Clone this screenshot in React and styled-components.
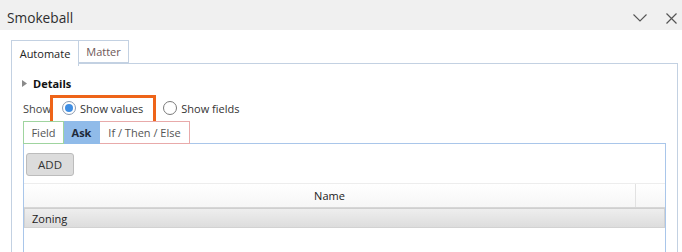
import styled, { createGlobalStyle } from "styled-components";

const GlobalStyle = createGlobalStyle`
  html, body {
    margin: 0;
    padding: 0;
    background: #ffffff;
    overflow: hidden;
  }
  body {
    font-family: "Open Sans", "Noto Sans", sans-serif;
    font-size: 11px;
    color: #333333;
  }
`;

const Window = styled.div`
  width: 682px;
  height: 252px;
  overflow: hidden;
  background: #ffffff;
`;

const TitleBar = styled.div`
  height: 30px;
  background: #f0f0f0;
  display: flex;
  align-items: center;
  justify-content: space-between;
  padding: 0 5px 0 7px;
`;

const Title = styled.span`
  font-size: 13.7px;
  color: #2e2e2e;
  padding-top: 4px;
`;

const TitleIcons = styled.div`
  display: flex;
  align-items: center;
  gap: 19px;
  padding-top: 6px;
`;

const Body = styled.div`
  padding: 10px 4px 0 11px;
`;

const TabStrip = styled.div`
  display: flex;
  align-items: flex-start;
  position: relative;
  z-index: 1;
`;

const Tab = styled.div`
  width: ${({ $width }) => $width}px;
  height: ${({ $active }) => ($active ? "26px" : "23px")};
  box-sizing: border-box;
  display: flex;
  align-items: center;
  justify-content: center;
  border: 1px solid #c3d1e2;
  border-bottom: ${({ $active }) => ($active ? "none" : "1px solid #c3d1e2")};
  border-left: ${({ $first }) => ($first ? "1px solid #c3d1e2" : "none")};
  background: #ffffff;
  color: ${({ $active }) => ($active ? "#222222" : "#6e5858")};
  font-size: 11px;
`;

const Panel = styled.div`
  margin-top: -3px;
  border: 1px solid #c3d1e2;
  border-bottom: none;
  height: 200px;
  padding: 0 11px 0 11px;
`;

const DetailsRow = styled.div`
  height: 16px;
  margin-top: 11px;
  display: flex;
  align-items: center;
  gap: 6px;
  margin-left: -1px;
`;

const DetailsLabel = styled.span`
  font-weight: 700;
  font-size: 11px;
  color: #111111;
`;

const ShowRow = styled.div`
  height: 18px;
  margin-top: 8px;
  display: flex;
  align-items: center;
`;

const ShowLabel = styled.span`
  width: 39px;
  color: #444444;
`;

const RadioOption = styled.label`
  position: relative;
  display: flex;
  align-items: center;
  gap: 4px;
  margin-right: 20px;
  color: #333333;
`;

const RadioCircle = styled.span`
  width: 14px;
  height: 14px;
  box-sizing: border-box;
  border-radius: 50%;
  border: 1px solid ${({ $checked }) => ($checked ? "#8a9ab0" : "#7a7a7a")};
  background: #ffffff;
  display: flex;
  align-items: center;
  justify-content: center;

  &::after {
    content: "";
    display: ${({ $checked }) => ($checked ? "block" : "none")};
    width: 8px;
    height: 8px;
    border-radius: 50%;
    background: #3f8ee3;
  }
`;

const Highlight = styled.span`
  position: absolute;
  left: -12px;
  top: -6px;
  width: 106px;
  height: 32px;
  box-sizing: border-box;
  border: 3px solid #ee6418;
  pointer-events: none;
`;

const InnerTabs = styled.div`
  margin-top: 4px;
  display: flex;
  position: relative;
  z-index: 1;
  margin-bottom: -1px;
`;

const InnerTab = styled.div`
  width: ${({ $width }) => $width}px;
  height: 23px;
  box-sizing: border-box;
  display: flex;
  align-items: center;
  justify-content: center;
  border: 1px solid ${({ $tone }) => $tone};
  border-left: ${({ $noLeft, $tone }) =>
    $noLeft ? "none" : `1px solid ${$tone}`};
  background: ${({ $active }) => ($active ? "#90bbe9" : "#ffffff")};
  font-weight: ${({ $active }) => ($active ? 700 : 400)};
  color: ${({ $active }) => ($active ? "#1d2a3a" : "#555555")};
  font-size: 11px;
`;

const InnerPanel = styled.div`
  border: 1px solid #a9c6ea;
  border-bottom: none;
  height: 140px;
  padding: 9px 0 0 0;
`;

const AddButton = styled.button`
  margin-left: 2px;
  width: 48px;
  height: 23px;
  border: 1px solid #bcbcbc;
  border-radius: 3px;
  background: #dcdcdc;
  color: #333333;
  font-family: "Open Sans", "Noto Sans", sans-serif;
  font-size: 11.5px;
  padding: 0;
  display: flex;
  align-items: center;
  justify-content: center;
`;

const Grid = styled.div`
  margin-top: 7px;
`;

const HeaderRow = styled.div`
  display: flex;
  height: 25px;
  box-sizing: border-box;
  border-top: 1px solid #ededed;
  border-bottom: 1px solid #d6d6d6;
  background: linear-gradient(#ffffff, #f6f6f6);
`;

const HeaderCell = styled.div`
  flex: ${({ $fill }) => ($fill ? "0 0 29px" : "1")};
  display: flex;
  align-items: center;
  justify-content: center;
  border-left: ${({ $fill }) => ($fill ? "1px solid #e2e2e2" : "none")};
  color: #1a1a1a;
  font-size: 11px;
`;

const DataRow = styled.div`
  height: 20px;
  box-sizing: border-box;
  display: flex;
  align-items: center;
  padding-left: 7px;
  border: 1px solid #d2d2d2;
  border-top-color: #cfcfcf;
  background: linear-gradient(#eeeeee, #dddddd);
  color: #222222;
  font-size: 11px;
`;

const Chevron = () => (
  <svg width="14" height="8" viewBox="0 0 14 8">
    <polyline
      points="0.5,0.5 7,7 13.5,0.5"
      fill="none"
      stroke="#555555"
      strokeWidth="1.1"
    />
  </svg>
);

const Close = () => (
  <svg width="11" height="11" viewBox="0 0 11 11">
    <path
      d="M0.5 0.5 L10.5 10.5 M10.5 0.5 L0.5 10.5"
      stroke="#555555"
      strokeWidth="1.2"
      fill="none"
    />
  </svg>
);

const Triangle = () => (
  <svg width="5" height="7" viewBox="0 0 5 7">
    <polygon points="0,0 5,3.5 0,7" fill="#8a8a8a" />
  </svg>
);

const Radio = ({ checked, label, highlighted }) => (
  <RadioOption>
    <RadioCircle $checked={checked} />
    <span>{label}</span>
    {highlighted && <Highlight />}
  </RadioOption>
);

export default function App() {
  return (
    <Window>
      <GlobalStyle />
      <TitleBar>
        <Title>Smokeball</Title>
        <TitleIcons>
          <Chevron />
          <Close />
        </TitleIcons>
      </TitleBar>
      <Body>
        <TabStrip>
          <Tab $active $first $width={68}>
            Automate
          </Tab>
          <Tab $width={50}>Matter</Tab>
        </TabStrip>
        <Panel>
          <DetailsRow>
            <Triangle />
            <DetailsLabel>Details</DetailsLabel>
          </DetailsRow>
          <ShowRow>
            <ShowLabel>Show</ShowLabel>
            <Radio checked label="Show values" highlighted />
            <Radio label="Show fields" />
          </ShowRow>
          <InnerTabs>
            <InnerTab $tone="#9fd49f" $width={41}>
              Field
            </InnerTab>
            <InnerTab $tone="#90bbe9" $active $noLeft $width={36}>
              Ask
            </InnerTab>
            <InnerTab $tone="#e8aaaa" $noLeft $width={90}>
              If / Then / Else
            </InnerTab>
          </InnerTabs>
          <InnerPanel>
            <AddButton>ADD</AddButton>
            <Grid>
              <HeaderRow>
                <HeaderCell>Name</HeaderCell>
                <HeaderCell $fill />
              </HeaderRow>
              <DataRow>Zoning</DataRow>
            </Grid>
          </InnerPanel>
        </Panel>
      </Body>
    </Window>
  );
}
